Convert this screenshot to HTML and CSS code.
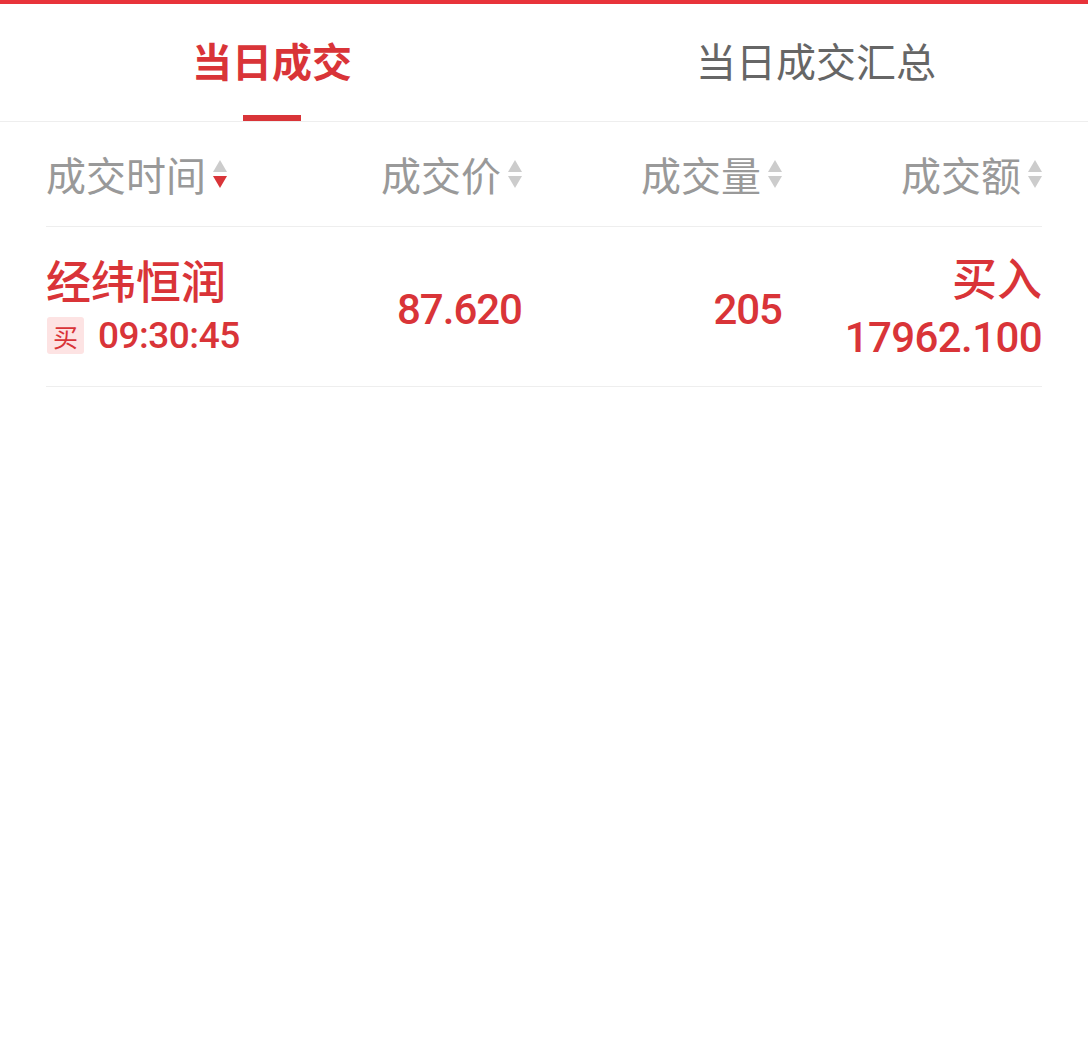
FILE: index.html
```html
<!DOCTYPE html>
<html lang="zh-CN">
<head>
    <meta charset="UTF-8">
    <meta name="viewport" content="width=device-width, initial-scale=1.0">
    <title>当日成交</title>
    <link rel="stylesheet" href="styles.css">
</head>
<body>
    <div class="top-bar"></div>

    <div class="tabs">
        <div class="tab active">当日成交</div>
        <div class="tab">当日成交汇总</div>
    </div>

    <div class="deal-table">
        <div class="deal-row head">
            <div class="cell left">成交时间<span class="sort down"></span></div>
            <div class="cell">成交价<span class="sort"></span></div>
            <div class="cell">成交量<span class="sort"></span></div>
            <div class="cell">成交额<span class="sort"></span></div>
        </div>

        <div class="deal-row item">
            <div class="cell left stack">
                <div class="name">经纬恒润</div>
                <div class="time"><span class="badge">买</span>09:30:45</div>
            </div>
            <div class="cell num">87.620</div>
            <div class="cell num">205</div>
            <div class="cell stack right">
                <div class="name">买入</div>
                <div class="num amount">17962.100</div>
            </div>
        </div>
    </div>
</body>
</html>
```

FILE: styles.css
```css
/* base */
body {
    margin: 0;
    padding: 0;
    background: #fff;
    font-family: "Noto Sans CJK SC", "Noto Sans", sans-serif;
    color: #333;
}

.top-bar {
    height: 4px;
    background-color: #e8333a;
}

/* tabs */
.tabs {
    display: grid;
    grid-template-columns: 1fr 1fr;
    height: 117px;
    border-bottom: 1px solid #eee;
}

.tab {
    display: flex;
    justify-content: center;
    padding-top: 31px;
    font-size: 40px;
    line-height: 50px;
    color: #666;
    position: relative;
}

.tab.active {
    color: #d93438;
    font-weight: bold;
}

.tab.active::after {
    content: "";
    position: absolute;
    bottom: 0;
    left: 50%;
    width: 58px;
    height: 6px;
    margin-left: -29px;
    background-color: #d93438;
}

/* table */
.deal-table {
    padding: 0 46px;
}

.deal-row {
    display: grid;
    grid-template-columns: 216px 260px 260px 260px;
    align-items: center;
    border-bottom: 1px solid #eee;
}

.deal-row.head {
    height: 104px;
    font-size: 40px;
    color: #999;
}

.deal-row.item {
    height: 159px;
    color: #d93438;
}

.cell {
    display: flex;
    align-items: center;
    justify-content: flex-end;
}

.cell.left {
    justify-content: flex-start;
}

.cell.stack {
    flex-direction: column;
    align-items: flex-start;
}

.cell.stack.right {
    align-items: flex-end;
}

/* sort arrows */
.sort {
    display: inline-block;
    position: relative;
    width: 14px;
    height: 30px;
    margin-left: 7px;
}

.sort::before,
.sort::after {
    content: "";
    position: absolute;
    left: 0;
    border-left: 7px solid transparent;
    border-right: 7px solid transparent;
}

.sort::before {
    top: 1px;
    border-bottom: 12px solid #ccc;
}

.sort::after {
    bottom: 1px;
    border-top: 12px solid #ccc;
}

.sort.down::after {
    border-top-color: #d93438;
}

/* row content */
.name {
    font-size: 45px;
    font-weight: 500;
    line-height: 46px;
    margin-bottom: 12px;
}

.num {
    font-family: Roboto, "Noto Sans", sans-serif;
    font-size: 42px;
    font-weight: 500;
    letter-spacing: -1px;
}

.cell.num {
    padding-top: 6px;
}

.num.amount {
    line-height: 44px;
    margin-top: 4px;
    letter-spacing: -0.6px;
}

.time {
    display: flex;
    align-items: center;
    font-family: Roboto, "Noto Sans", sans-serif;
    font-size: 37px;
    font-weight: 500;
    letter-spacing: -0.5px;
    line-height: 42px;
}

.badge {
    display: inline-flex;
    align-items: center;
    justify-content: center;
    width: 37px;
    height: 37px;
    margin: 0 14px 0 1px;
    border-radius: 3px;
    background-color: #fde3e3;
    font-family: "Noto Sans CJK SC", sans-serif;
    font-size: 25px;
    font-weight: normal;
    letter-spacing: 0;
}
```
